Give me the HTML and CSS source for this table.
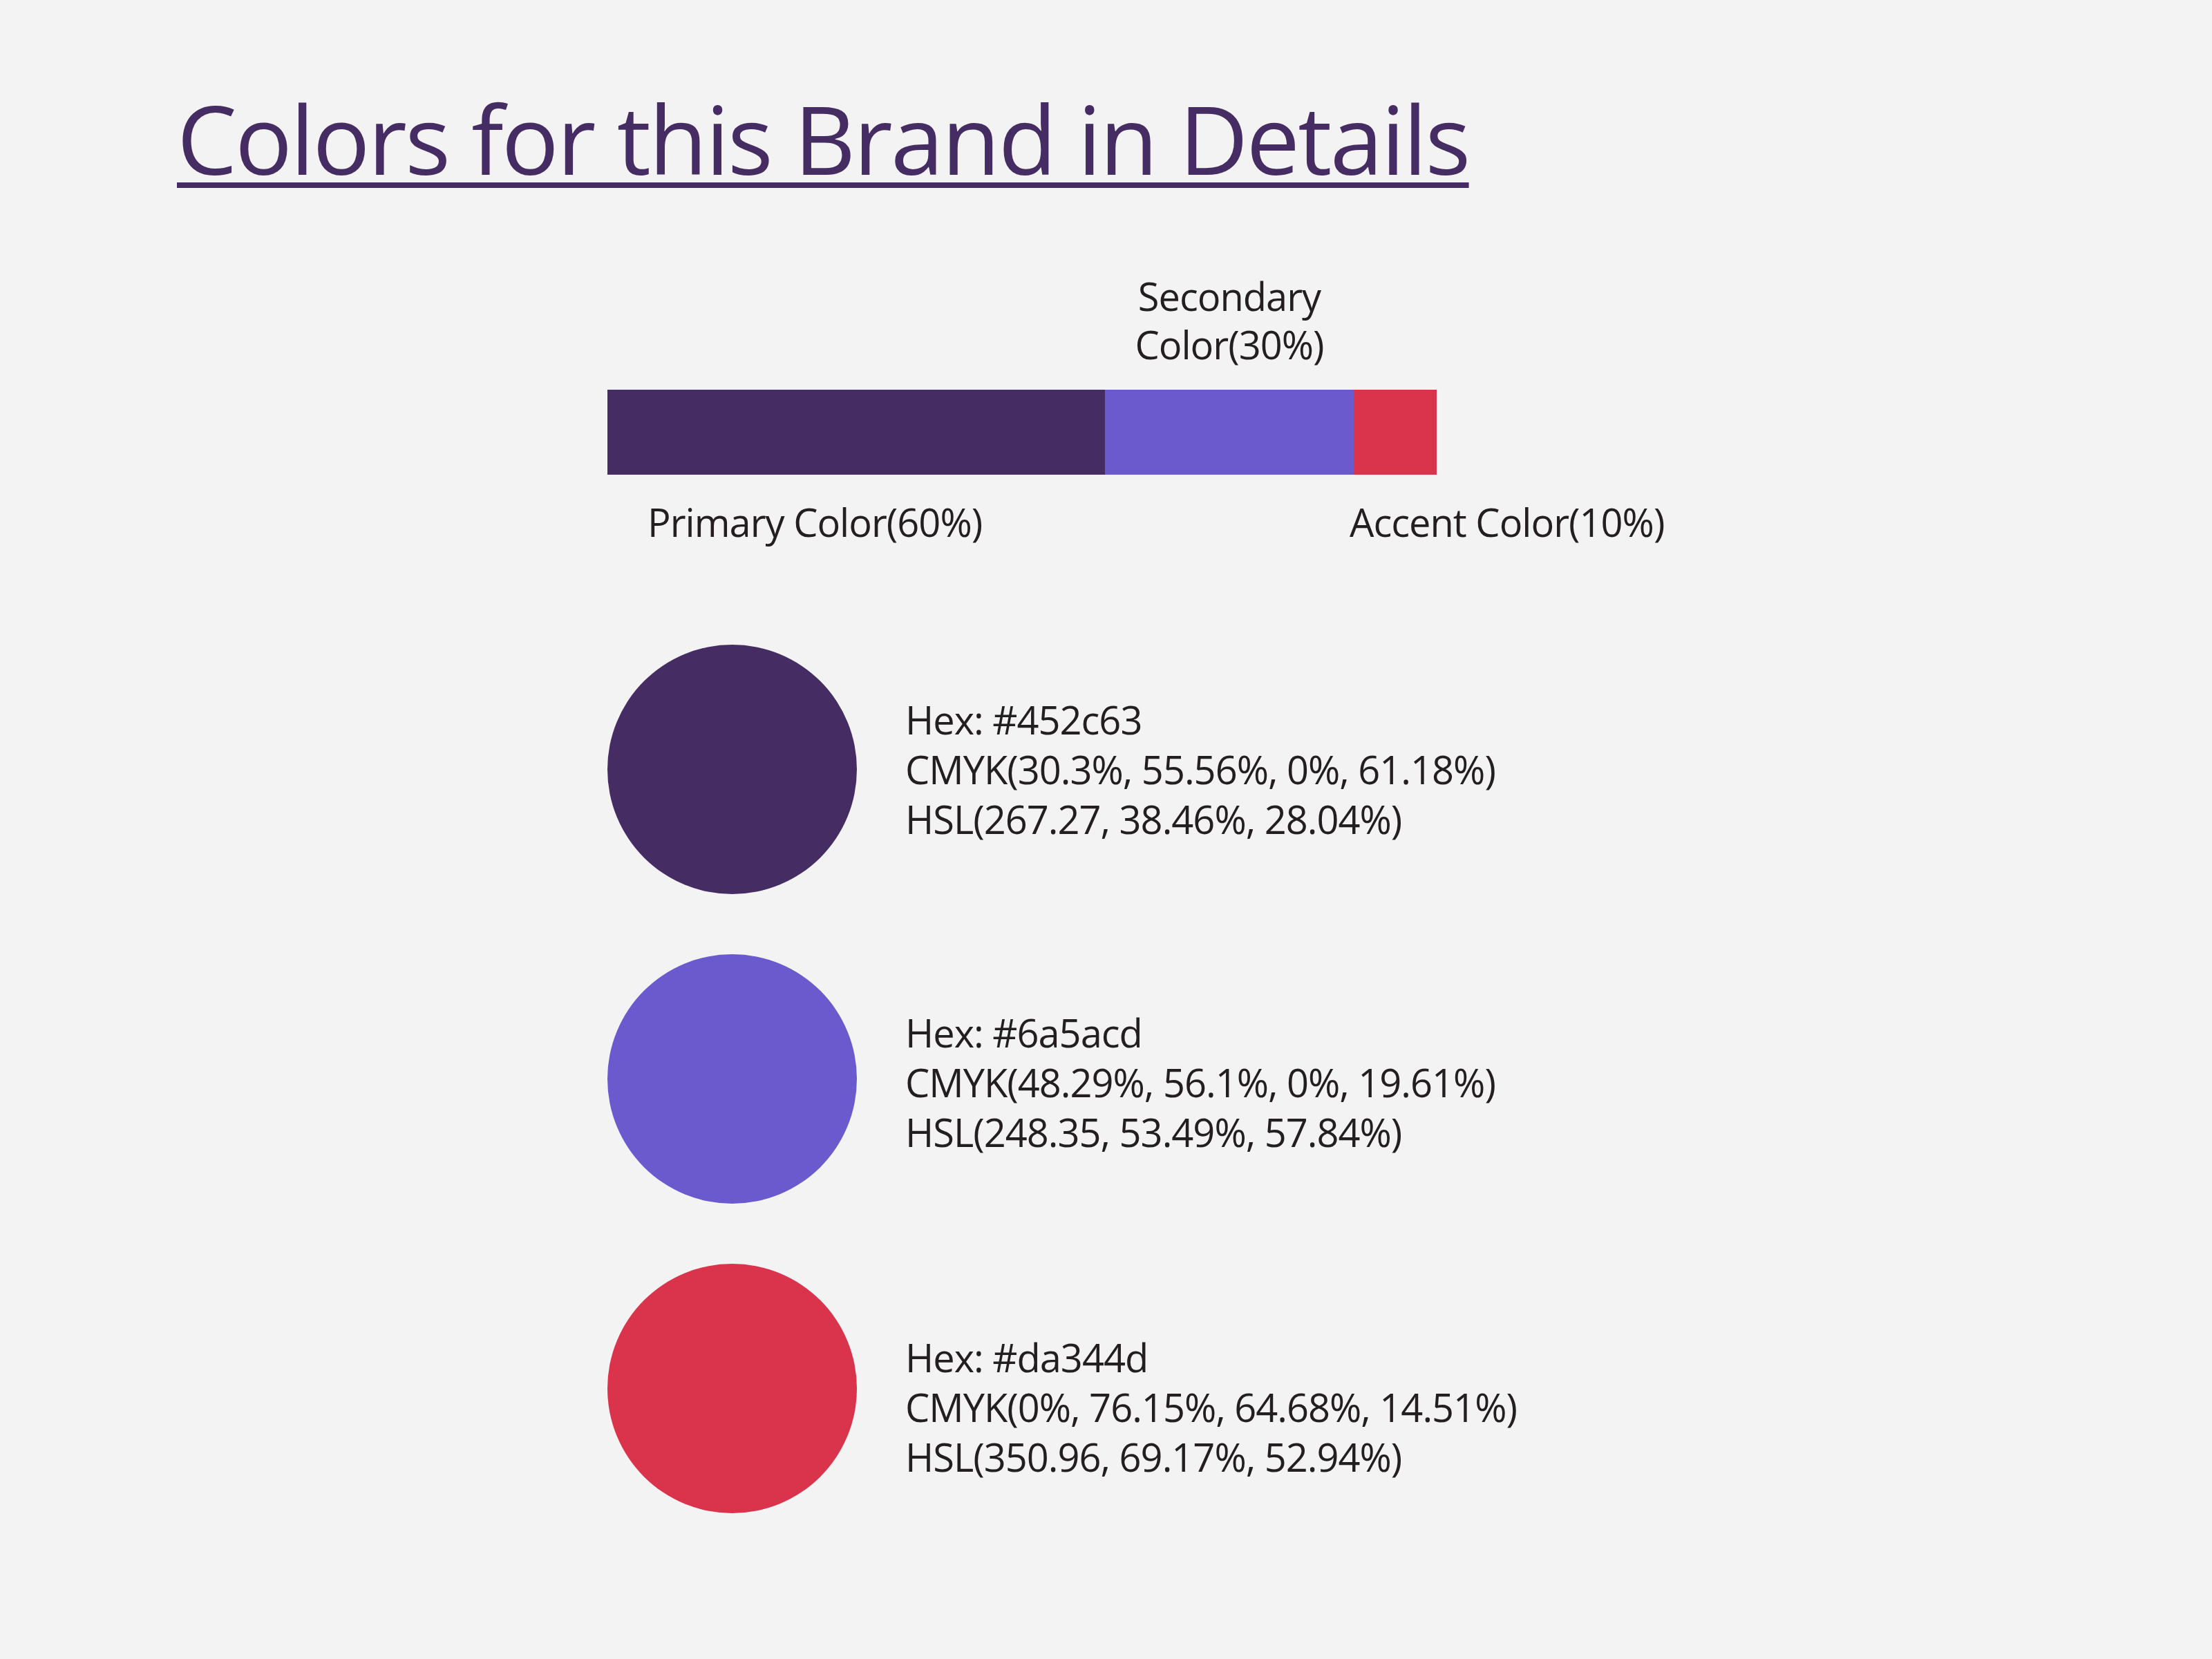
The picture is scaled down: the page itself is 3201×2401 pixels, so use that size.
FILE: index.html
```html
<!DOCTYPE html>
<html lang="en">
<head>
<meta charset="utf-8">
<title>Colors for this Brand in Details</title>
<link rel="stylesheet" href="styles.css">
</head>
<body>
<main class="page">
  <h1 class="title">Colors for this Brand in Details</h1>
  <section class="content">
    <div class="ratio">
      <span class="label label-secondary">Secondary<br>Color(30%)</span>
      <div class="seg seg-primary"></div>
      <div class="seg seg-secondary"></div>
      <div class="seg seg-accent"></div>
      <span class="label label-primary">Primary Color(60%)</span>
      <span class="label label-accent">Accent Color(10%)</span>
    </div>
    <ul class="swatches">
      <li class="swatch swatch-1">
        <div class="dot dot-primary"></div>
        <div class="info">
          <p>Hex: #452c63</p>
          <p>CMYK(30.3%, 55.56%, 0%, 61.18%)</p>
          <p>HSL(267.27, 38.46%, 28.04%)</p>
        </div>
      </li>
      <li class="swatch swatch-2">
        <div class="dot dot-secondary"></div>
        <div class="info">
          <p>Hex: #6a5acd</p>
          <p>CMYK(48.29%, 56.1%, 0%, 19.61%)</p>
          <p>HSL(248.35, 53.49%, 57.84%)</p>
        </div>
      </li>
      <li class="swatch swatch-3">
        <div class="dot dot-accent"></div>
        <div class="info">
          <p>Hex: #da344d</p>
          <p>CMYK(0%, 76.15%, 64.68%, 14.51%)</p>
          <p>HSL(350.96, 69.17%, 52.94%)</p>
        </div>
      </li>
    </ul>
  </section>
</main>
</body>
</html>
```

FILE: styles.css
```css
html, body {
  margin: 0;
  padding: 0;
  background: #f3f3f3;
}

body {
  font-family: "Open Sans", "Noto Sans", sans-serif;
  color: #231f20;
}

.page {
  padding-top: 130px;
  min-height: 2401px;
  box-sizing: border-box;
}

.title {
  margin: 0 0 0 256px;
  font-size: 138px;
  line-height: 138px;
  font-weight: 400;
  letter-spacing: -2.8px;
  color: #452c63;
  text-decoration: underline;
  text-decoration-thickness: 8px;
  text-underline-offset: 11px;
  display: inline-block;
}

.content {
  margin: 125px 0 0 879px;
}

.label {
  font-size: 56px;
  line-height: 70px;
  letter-spacing: -1px;
  white-space: nowrap;
}

.ratio {
  display: grid;
  grid-template-columns: 720px 360px 120px;
  grid-template-rows: auto 123px auto;
}

.label-secondary {
  grid-column: 2;
  grid-row: 1;
  justify-self: center;
  text-align: center;
  margin-bottom: 31px;
}

.seg {
  grid-row: 2;
}

.seg-primary { grid-column: 1; background: #452c63; }
.seg-secondary { grid-column: 2; background: #6a5acd; }
.seg-accent { grid-column: 3; background: #da344d; }

.label-primary {
  grid-column: 1;
  grid-row: 3;
  padding-left: 58px;
  margin-top: 33px;
}

.label-accent {
  grid-column: 3;
  grid-row: 3;
  margin-left: -6px;
  margin-top: 33px;
}

.swatches {
  list-style: none;
  margin: 143px 0 0 0;
  padding: 0;
  display: flex;
  flex-direction: column;
  gap: 87px;
}

.swatch {
  display: flex;
  align-items: flex-start;
  gap: 70px;
}

.dot {
  width: 361px;
  height: 361px;
  border-radius: 50%;
  flex: none;
}

.dot-primary { background: #452c63; }
.dot-secondary { background: #6a5acd; }
.dot-accent { background: #da344d; }

.info {
  font-size: 56px;
  line-height: 72px;
  letter-spacing: -1px;
  white-space: nowrap;
}

.info p {
  margin: 0;
}

.swatch-1 .info { margin-top: 72px; }
.swatch-2 .info { margin-top: 77px; }
.swatch-3 .info { margin-top: 99px; }
```
